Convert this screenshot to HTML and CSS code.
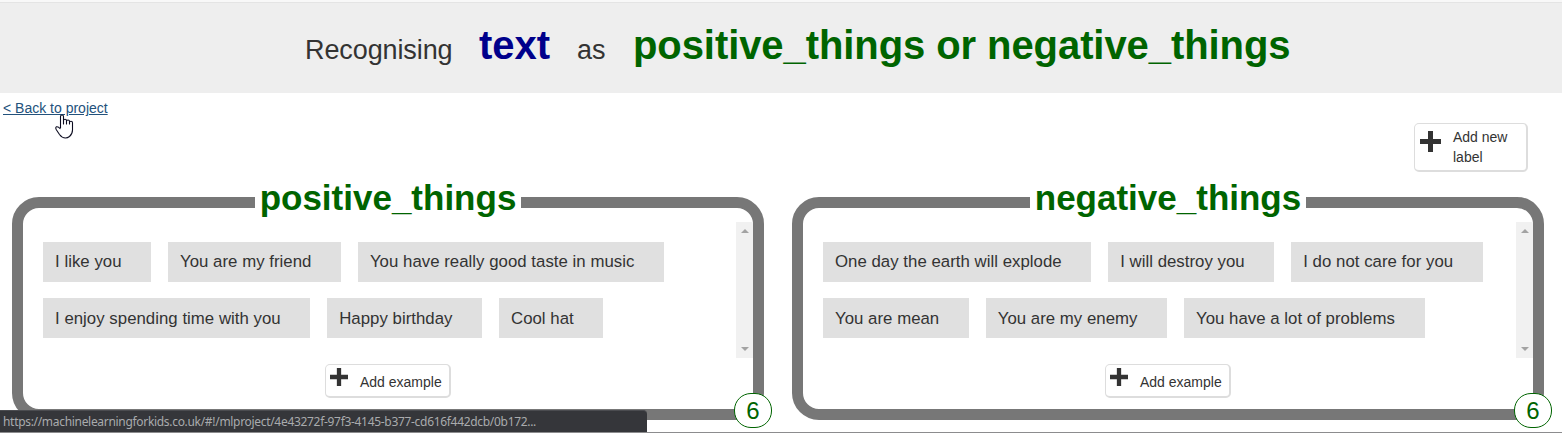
FILE: index.html
```html
<!DOCTYPE html>
<html lang="en">
<head>
<meta charset="utf-8">
<title>Training</title>
<link rel="stylesheet" href="styles.css">
</head>
<body>
<header class="banner"><span class="small">Recognising</span><strong class="kind">text</strong><span class="small as">as</span><strong class="labels">positive_things or negative_things</strong></header>
<main>
<a class="back" href="#">&lt; Back to project</a>
<div class="toolbar"><button class="btn new"><svg class="plus" viewBox="0 0 21 21"><path d="M8 0h5v8h8v5h-8v8H8v-8H0V8h8z"/></svg><span>Add new label</span></button></div>
<div class="buckets">
<section class="bucket">
<h2>positive_things</h2>
<div class="scroller">
<div class="chips">
<div class="row"><span class="chip">I like you</span><span class="chip">You are my friend</span><span class="chip">You have really good taste in music</span></div>
<div class="row"><span class="chip">I enjoy spending time with you</span><span class="chip">Happy birthday</span><span class="chip">Cool hat</span></div>
</div>
<div class="bar"><i class="up"></i><i class="down"></i></div>
</div>
<button class="btn add"><svg class="plus" viewBox="0 0 21 21"><path d="M8 0h5v8h8v5h-8v8H8v-8H0V8h8z"/></svg><span>Add example</span></button>
<span class="count">6</span>
</section>
<section class="bucket">
<h2>negative_things</h2>
<div class="scroller">
<div class="chips">
<div class="row"><span class="chip">One day the earth will explode</span><span class="chip">I will destroy you</span><span class="chip">I do not care for you</span></div>
<div class="row"><span class="chip">You are mean</span><span class="chip">You are my enemy</span><span class="chip">You have a lot of problems</span></div>
</div>
<div class="bar"><i class="up"></i><i class="down"></i></div>
</div>
<button class="btn add"><svg class="plus" viewBox="0 0 21 21"><path d="M8 0h5v8h8v5h-8v8H8v-8H0V8h8z"/></svg><span>Add example</span></button>
<span class="count">6</span>
</section>
</div>
</main>
<div class="status">https://machinelearningforkids.co.uk/#!/mlproject/4e43272f-97f3-4145-b377-cd616f442dcb/0b172...</div>
<svg class="pointer" viewBox="0 0 19 25"><path d="M5.5 14V2.5Q5.5 1 7 1T8.500 2.500V10V6.500Q8.500 5.300 10 5.300T11.500 6.500V10V7.300Q11.500 6 13 6T14.500 7.300V10V8.300Q14.500 7.200 16 7.200T17.500 8.800V16Q17.500 20 14.500 22.500Q12.500 24 10.500 24Q7 24 4.500 20.500L1.500 16Q0 13.600 1.500 12.800Q3 12.200 5.500 15"/></svg>
</body>
</html>
```
FILE: styles.css
```css
* { box-sizing: border-box; }
body { margin: 0; height: 433px; overflow: hidden; background: #fff; color: #333; font-family: "Liberation Sans", Arial, sans-serif; font-size: 14px; border-bottom: 1px solid #8c8c8e; }
.banner { height: 93px; padding: 15px 0 0 305px; background: #eee; border-top: 2px solid #f8f8f8; box-shadow: inset 0 1px #e4e4e4; display: flex; align-items: baseline; line-height: 56px; white-space: nowrap; }
.small { font-size: 27px; width: 174px; letter-spacing: -.1px; }
.as { width: 56px; margin-left: 1px; letter-spacing: 0; }
.kind, .labels { font-size: 40px; }
.kind { color: #00008b; width: 97px; }
.labels { color: #006400; letter-spacing: -.08px; }
.back { display: block; margin: 7px 0 0 3px; width: max-content; line-height: 16px; color: #23527c; text-decoration: underline; }
.toolbar { display: flex; justify-content: flex-end; padding: 7px 34px 0 0; }
.btn { display: flex; background: #fff; border: 1px solid #ddd; border-right-width: 2px; border-bottom-width: 2px; border-radius: 5px; font: 14px/20px "Liberation Sans", Arial, sans-serif; color: #333; text-align: left; padding: 0; }
.plus { fill: #333; flex: none; }
.new { width: 114px; height: 49px; padding: 3px 10px 0 5px; gap: 12px; }
.new .plus { width: 21px; height: 21px; margin-top: 4px; }
.buckets { display: flex; gap: 28px; padding: 25px 0 0 12px; }
.bucket { position: relative; width: 752px; height: 223px; border: 11px solid #777; border-radius: 27px; display: flex; flex-direction: column; align-items: center; }
.bucket h2 { margin: -30px 0 0; height: 44px; line-height: 40px; padding: 0 5px; background: #fff; color: #006400; font-size: 35px; }
.scroller { align-self: stretch; display: flex; justify-content: space-between; height: 136px; }
.chips { padding: 20px 0 0 20px; display: flex; flex-direction: column; gap: 16px; }
.row { display: flex; gap: 16.8px; }
.chip { height: 40px; line-height: 40px; padding: 0 29.7px 0 12px; background: #e0e0e0; font-size: 16.8px; letter-spacing: .03px; white-space: nowrap; }
.row + .row .chip { line-height: 42px; }
.bar { width: 17px; background: #f1f1f1; display: flex; flex-direction: column; justify-content: space-between; align-items: center; padding: 7px 0; }
.bar i { border: 4px solid transparent; border-top: 0; border-bottom-color: #a3a3a3; }
.bar .down { border-top: 4px solid #a3a3a3; border-bottom: 0; }
.add { width: 126px; height: 34px; margin-top: 6px; padding: 7px 0 0 4px; gap: 12px; white-space: nowrap; }
.add .plus { width: 18px; height: 18px; margin-top: -4px; }
.count { position: absolute; right: -19px; bottom: -19px; width: 38px; height: 35px; border: 1px solid #006400; border-radius: 17px; background: #fff; color: #006400; font-size: 24px; line-height: 34px; text-align: center; }
.status { position: absolute; left: 0; bottom: 1px; width: 647px; height: 22px; padding-left: 3px; background: #35363a; border-top: 1px solid #4b4c50; border-top-right-radius: 4px; color: #a9abad; font: 12px/22px "Noto Sans", sans-serif; letter-spacing: -.31px; white-space: nowrap; }
.pointer { position: absolute; left: 55px; top: 114px; width: 19px; height: 25px; fill: #fff; stroke: #0c0c20; stroke-width: 1.1; stroke-linejoin: round; }
```
